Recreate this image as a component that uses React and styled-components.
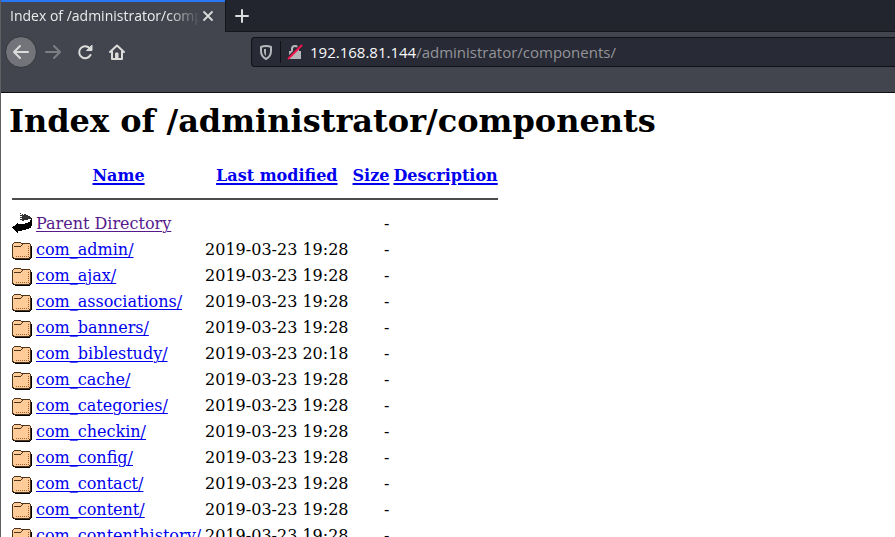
import React from "react";
import styled, { createGlobalStyle } from "styled-components";

const GlobalStyle = createGlobalStyle`
  * { box-sizing: border-box; }
  body { margin: 0; background: #ffffff; }
`;

const Window = styled.div`
  display: flex;
  flex-direction: column;
  height: 100vh;
  overflow: hidden;
  border-left: 1px solid #5e5f63;
  font-family: "Open Sans", "Noto Sans", sans-serif;
`;

const Chrome = styled.header`
  flex: none;
  background: #42454e;
  border-bottom: 1px solid #0f1014;
`;

const TabStrip = styled.div`
  display: flex;
  height: 32px;
  background: #23252e;
`;

const Tab = styled.div`
  display: flex;
  align-items: center;
  width: 224px;
  padding: 0 9px 2px;
  background: #42454e;
  border-top: 2px solid #2a77f6;
`;

const TabTitle = styled.span`
  flex: 1;
  overflow: hidden;
  white-space: nowrap;
  font-size: 14px;
  line-height: 20px;
  color: #ebebec;
  mask-image: linear-gradient(to left, transparent, #000 32px);
`;

const IconButton = styled.button`
  display: flex;
  align-items: center;
  justify-content: center;
  flex: none;
  width: ${(p) => p.$size || 32}px;
  height: ${(p) => p.$size || 32}px;
  padding: 0;
  border: ${(p) => (p.$round ? "1px solid #33353c" : "none")};
  border-radius: ${(p) => (p.$round ? "50%" : "4px")};
  background: ${(p) => (p.$round ? "#72747a" : "transparent")};
  color: ${(p) => (p.$dim ? "#7c7e84" : "#dcdcdb")};
`;

const StripRest = styled.div`
  display: flex;
  flex: 1;
  border-left: 1px solid #15161b;
  border-bottom: 1px solid #15161b;
`;

const Toolbar = styled.div`
  display: flex;
  align-items: center;
  height: 60px;
  padding: 4px 0 24px 4px;
`;

const NavButtons = styled.nav`
  display: flex;
  align-items: center;
  width: 246px;
`;

const AddressBar = styled.div`
  display: flex;
  align-items: center;
  flex: 1;
  height: 30px;
  padding-left: 6px;
  background: #282a35;
  border: 1px solid #101116;
  border-right: none;
  border-radius: 4px 0 0 4px;
  font-size: 15px;
  line-height: 20px;
`;

const Divider = styled.span`
  width: 1px;
  height: 22px;
  margin: 0 6px;
  background: #101116;
`;

const Host = styled.label`
  margin-left: 7px;
  color: #f9f9fa;
`;

const PathInput = styled.input`
  flex: 1;
  min-width: 0;
  padding: 0;
  border: none;
  outline: none;
  background: transparent;
  color: #94959a;
  font: inherit;
`;

const Page = styled.main`
  flex: 1;
  min-height: 0;
  overflow: hidden;
  padding: 9px 8px 0;
  color: #000000;
  font-family: "DejaVu Serif", serif;
  font-size: 16px;
  line-height: 19px;
`;

const Title = styled.h1`
  margin: 0 0 21px;
  font-size: 32px;
  line-height: 38px;
`;

const Listing = styled.table`
  border-collapse: separate;
  border-spacing: 2px;
`;

const Cell = styled.td`
  height: 24px;
  padding: 1px;
  text-align: ${(p) => p.$align || "left"};
  white-space: nowrap;
`;

const RuleCell = styled.td`
  padding: 1px;
`;

const HeadCell = styled.th`
  height: 24px;
  padding: 1px;
  white-space: nowrap;
`;

const Rule = styled.hr`
  height: 2px;
  margin: 8px 0;
  border: solid;
  border-width: 1px 0;
  border-color: #4c4c4c #8a8a8a;
`;

const Link = styled.a`
  color: ${(p) => (p.$visited ? "#551a8b" : "#0000ee")};
  text-decoration: underline;
  text-decoration-thickness: ${(p) => (p.$heavy ? 2 : 1)}px;
  text-underline-offset: 2px;
`;

const Glyph = styled.svg`
  display: block;
  flex: none;
`;

const Stroke = ({ children, size = 16, width = 2 }) => (
  <Glyph width={size} height={size} viewBox="0 0 16 16" fill="none" stroke="currentColor" strokeWidth={width} strokeLinecap="round" strokeLinejoin="round">
    {children}
  </Glyph>
);

const FolderIcon = () => (
  <Glyph width="20" height="22" viewBox="0 0 20 22" shapeRendering="crispEdges" role="img" aria-label="[DIR]">
    <path fill="#000" d="M18 7h1v1h1v12h-1v1h-1v1H3v-1H1v-1h17z" />
    <path fill="#4d3319" d="M2 4h7v1h9v1h1v14h-1v1H2v-1H0V6h1V5h1z" />
    <path fill="#ffcc99" d="M2 5h7v1h9v13h-1v1H2v-1H1V6h1z" />
    <path fill="#4d3319" d="M1 8h8v1H1zM9 7h1v1H9zM10 6h1v1h-1z" />
    <path fill="#ffcc99" d="M1 8h1v1H1z" />
    <path fill="#996633" d="M4 18h1v1H4zM6 18h1v1H6zM8 18h1v1H8zM10 18h1v1h-1zM12 18h1v1h-1zM14 18h1v1h-1zM16 18h1v1h-1zM16 8h1v1h-1zM16 10h1v1h-1zM16 12h1v1h-1zM16 14h1v1h-1zM16 16h1v1h-1z" />
  </Glyph>
);

const BackIcon = () => (
  <Glyph width="20" height="22" viewBox="0 0 20 22" shapeRendering="crispEdges" role="img" aria-label="[PARENTDIR]">
    <path fill="#333" d="M9 2h5v1h2v1h2v1h1v2h-3v1h-4v1H9z" />
    <path fill="#333" d="M8 1h1v1H8zM8 3h1v1H8zM8 5h1v1H8zM8 7h1v1H8z" />
    <path fill="#fff" d="M9 2h1v1H9zM9 4h1v1H9zM9 6h1v1H9zM9 8h1v1H9zM11 2h1v1h-1z" />
    <path fill="#000" d="M19 6h1v8h-1v2h-2v1h-3v1h-4v1H6v2H5v-1H4v-1H3v-1H2v-1H1v-1H0v-1h1v-1h2v-1h1v-1h1v-1h1v1h7v-1h3v-1h2V8h1z" />
  </Glyph>
);

const entries = [
  ["com_admin/", "2019-03-23 19:28"],
  ["com_ajax/", "2019-03-23 19:28"],
  ["com_associations/", "2019-03-23 19:28"],
  ["com_banners/", "2019-03-23 19:28"],
  ["com_biblestudy/", "2019-03-23 20:18"],
  ["com_cache/", "2019-03-23 19:28"],
  ["com_categories/", "2019-03-23 19:28"],
  ["com_checkin/", "2019-03-23 19:28"],
  ["com_config/", "2019-03-23 19:28"],
  ["com_contact/", "2019-03-23 19:28"],
  ["com_content/", "2019-03-23 19:28"],
  ["com_contenthistory/", "2019-03-23 19:28"],
];

const columns = ["Name", "Last modified", "Size", "Description"];

const Row = ({ icon, name, date, visited }) => (
  <tr>
    <Cell>{icon}</Cell>
    <Cell><Link href={visited ? "#parent" : `#${name}`} $visited={visited}>{name}</Link></Cell>
    <Cell $align="right">{date}</Cell>
    <Cell $align="right">-</Cell>
    <Cell />
  </tr>
);

export default function App() {
  return (
    <Window>
      <GlobalStyle />
      <Chrome>
        <TabStrip>
          <Tab>
            <TabTitle>Index of /administrator/components</TabTitle>
            <IconButton $size={16} aria-label="Close tab">
              <Stroke width={1.8}><path d="M4 4l8 8M12 4l-8 8" /></Stroke>
            </IconButton>
          </Tab>
          <StripRest>
            <IconButton aria-label="New tab">
              <Stroke><path d="M8 2v12M2 8h12" /></Stroke>
            </IconButton>
          </StripRest>
        </TabStrip>
        <Toolbar>
          <NavButtons>
            <IconButton $size={32} $round aria-label="Back">
              <Stroke><path d="M15 8H1M7 2L1 8l6 6" /></Stroke>
            </IconButton>
            <IconButton $dim aria-label="Forward">
              <Stroke><path d="M1 8h14M9 2l6 6-6 6" /></Stroke>
            </IconButton>
            <IconButton aria-label="Reload">
              <Stroke>
                <path d="M13.500 11A6 6 0 1 1 12.500 4" />
                <path d="M15 1.500v5h-5z" fill="currentColor" strokeWidth="1" />
              </Stroke>
            </IconButton>
            <IconButton aria-label="Home">
              <Stroke>
                <path d="M1 8l7-6.500L15 8M3 7.500V15h10V7.500" />
                <path d="M7 9h2v5H7z" strokeWidth="1" fill="currentColor" />
              </Stroke>
            </IconButton>
          </NavButtons>
          <AddressBar>
            <Glyph width="16" height="16" viewBox="0 0 16 16" fill="none" stroke="#b5b6ba" strokeWidth="2" strokeLinejoin="round">
              <path d="M8 2C6 2 4 2.500 3 3v4c0 4 2 6.500 5 8 3-1.500 5-4 5-8V3c-1-.5-3-1-5-1z" />
              <path d="M8 5v7C6.500 11 6 9 6 7V5z" fill="#b5b6ba" stroke="none" />
            </Glyph>
            <Divider />
            <Glyph width="16" height="16" viewBox="0 0 16 16" fill="none">
              <path d="M5 7V5a3 3 0 0 1 6 0v2" stroke="#b5b6ba" strokeWidth="2" />
              <path d="M2 7h12v8H2z" fill="#b5b6ba" />
              <path d="M1 13.500L13 1.500" stroke="#282a35" strokeWidth="2" />
              <path d="M1.500 14.500l13-13" stroke="#f0144b" strokeWidth="2" strokeLinecap="round" />
            </Glyph>
            <Host htmlFor="address">192.168.81.144</Host>
            <PathInput id="address" type="text" defaultValue="/administrator/components/" />
          </AddressBar>
        </Toolbar>
      </Chrome>
      <Page>
        <Title>Index of /administrator/components</Title>
        <Listing>
          <thead>
            <tr>
              <HeadCell />
              {columns.map((label) => (
                <HeadCell key={label} scope="col">
                  <Link href={`#sort-${label}`} $heavy>{label}</Link>
                </HeadCell>
              ))}
            </tr>
          </thead>
          <tbody>
            <tr>
              <RuleCell colSpan={5}><Rule /></RuleCell>
            </tr>
            <Row icon={<BackIcon />} name="Parent Directory" visited />
            {entries.map(([name, date]) => (
              <Row key={name} icon={<FolderIcon />} name={name} date={date} />
            ))}
          </tbody>
        </Listing>
      </Page>
    </Window>
  );
}
